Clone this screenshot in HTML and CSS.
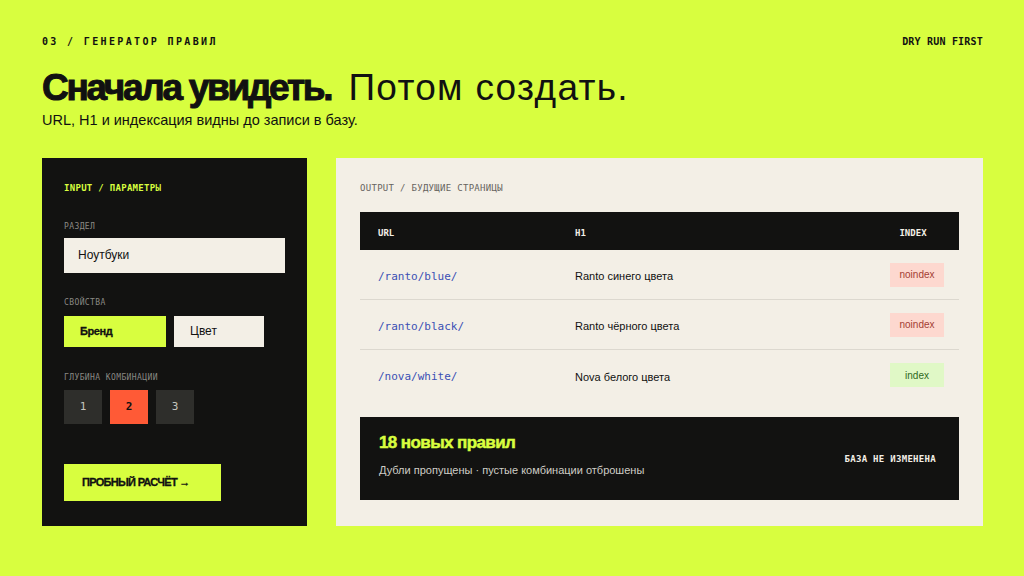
FILE: index.html
```html
<!DOCTYPE html>
<html lang="ru">
<head>
<meta charset="utf-8">
<link rel="stylesheet" href="styles.css">
</head>
<body>
<div class="page">
  <header class="topbar">
    <div class="eyebrow">03 / ГЕНЕРАТОР ПРАВИЛ</div>
    <div class="tag">DRY RUN FIRST</div>
  </header>
  <h1 class="title"><span class="strong">Сначала увидеть.</span> <span class="light">Потом создать.</span></h1>
  <p class="lead">URL, H1 и индексация видны до записи в базу.</p>

  <main class="panels">
    <section class="input-panel">
      <div class="panel-label lime">INPUT / ПАРАМЕТРЫ</div>
      <div class="field-label first">РАЗДЕЛ</div>
      <div class="input-box">Ноутбуки</div>
      <div class="field-label props">СВОЙСТВА</div>
      <div class="chips">
        <div class="chip active">Бренд</div>
        <div class="chip">Цвет</div>
      </div>
      <div class="field-label deep">ГЛУБИНА КОМБИНАЦИИ</div>
      <div class="depth">
        <div class="num">1</div>
        <div class="num on">2</div>
        <div class="num">3</div>
      </div>
      <div class="run-btn">ПРОБНЫЙ РАСЧЁТ →</div>
    </section>

    <section class="output-panel">
      <div class="panel-label gray">OUTPUT / БУДУЩИЕ СТРАНИЦЫ</div>
      <div class="table">
        <div class="row head">
          <div>URL</div>
          <div>H1</div>
          <div class="c">INDEX</div>
        </div>
        <div class="row">
          <div class="url">/ranto/blue/</div>
          <div class="h1">Ranto синего цвета</div>
          <div class="badge no">noindex</div>
        </div>
        <div class="row">
          <div class="url">/ranto/black/</div>
          <div class="h1">Ranto чёрного цвета</div>
          <div class="badge no">noindex</div>
        </div>
        <div class="row last">
          <div class="url">/nova/white/</div>
          <div class="h1">Nova белого цвета</div>
          <div class="badge yes">index</div>
        </div>
      </div>
      <div class="summary">
        <div class="sum-text">
          <div class="sum-title">18 новых правил</div>
          <div class="sum-sub">Дубли пропущены · пустые комбинации отброшены</div>
        </div>
        <div class="sum-status">БАЗА НЕ ИЗМЕНЕНА</div>
      </div>
    </section>
  </main>
</div>
</body>
</html>
```

FILE: styles.css
```css
* { box-sizing: border-box; }
html, body { margin: 0; padding: 0; }
body {
  width: 1024px;
  height: 576px;
  background: #d8fe3f;
  font-family: "Liberation Sans", Arial, sans-serif;
  color: #111;
  overflow: hidden;
}
.page {
  padding: 36px 41px 0 42px;
}
.topbar {
  display: flex;
  justify-content: space-between;
  align-items: center;
  height: 12px;
}
.eyebrow {
  font-family: "DejaVu Sans Mono", monospace;
  font-weight: 700;
  font-size: 10px;
  letter-spacing: 2.35px;
  line-height: 12px;
}
.tag {
  font-family: "DejaVu Sans Mono", monospace;
  font-size: 10px;
  letter-spacing: 0.2px;
  line-height: 12px;
  font-weight: 700;
}
.title {
  margin: 19px 0 0;
  font-size: 37px;
  line-height: 41px;
  font-weight: 400;
  white-space: nowrap;
}
.title .strong {
  font-weight: 700;
  letter-spacing: -2.3px;
  -webkit-text-stroke: 1px #111;
}
.title .light {
  margin-left: 7px;
  letter-spacing: 1.3px;
}
.lead {
  margin: 3px 0 0;
  font-size: 14.5px;
  line-height: 18px;
}
.panels {
  margin-top: 29px;
  display: flex;
  gap: 29px;
  height: 368px;
}
.input-panel {
  width: 265px;
  background: #121211;
  padding: 25px 22px;
  display: flex;
  flex-direction: column;
  align-items: flex-start;
}
.panel-label {
  font-family: "DejaVu Sans Mono", monospace;
  font-size: 9px;
  line-height: 10px;
  letter-spacing: 0.3px;
}
.panel-label.lime { color: #d8fe3f; font-weight: 700; }
.panel-label.gray { color: #66645f; }
.field-label {
  font-family: "DejaVu Sans Mono", monospace;
  font-size: 8px;
  line-height: 10px;
  letter-spacing: 0.4px;
  color: #8a8984;
  margin-top: 23px;
}
.field-label.first { margin-top: 29px; }
.field-label.props { margin-top: 25px; }
.field-label.deep { margin-top: 26px; }
.input-box {
  margin-top: 6px;
  width: 221px;
  height: 37px;
  background: #f3efe6;
  color: #111;
  font-size: 12px;
  display: flex;
  align-items: center;
  padding-left: 14px;
}
.chips {
  margin-top: 8px;
  display: flex;
  gap: 8px;
}
.chip {
  height: 31px;
  width: 90px;
  background: #f3efe6;
  font-size: 12px;
  display: flex;
  align-items: center;
  padding-left: 16px;
}
.chip.active {
  width: 102px;
  background: #d8fe3f;
  font-weight: 700;
  font-size: 11px;
  letter-spacing: -0.4px;
  -webkit-text-stroke: 0.3px #111;
}
.depth {
  margin-top: 7px;
  display: flex;
  gap: 8px;
}
.num {
  width: 38px;
  height: 34px;
  background: #2e2e2b;
  color: #c4c3bd;
  font-family: "DejaVu Sans Mono", monospace;
  font-size: 11px;
  display: flex;
  align-items: center;
  justify-content: center;
}
.num.on { background: #ff5a36; color: #111; font-weight: 700; }
.run-btn {
  margin-top: 40px;
  width: 157px;
  height: 40px;
  background: #d8fe3f;
  display: flex;
  align-items: center;
  padding-left: 18px;
  font-weight: 700;
  font-size: 11px;
  letter-spacing: -0.7px;
  -webkit-text-stroke: 0.3px #111;
  white-space: nowrap;
}
.output-panel {
  width: 647px;
  background: #f3efe6;
  padding: 25px 24px;
}
.table { margin-top: 19px; }
.row {
  display: grid;
  grid-template-columns: 197px 1fr 54px;
  align-items: center;
  height: 50px;
  padding: 3px 15px 0 18px;
  border-bottom: 1px solid #dcd8cf;
}
.row.last { border-bottom: none; }
.row.head {
  height: 38px;
  background: #121211;
  color: #f3efe6;
  border-bottom: none;
  font-family: "DejaVu Sans Mono", monospace;
  font-size: 9px;
  font-weight: 700;
  padding-top: 3px;
}
.row.head .c { text-align: center; margin-left: -8px; }
.url {
  font-family: "DejaVu Sans Mono", monospace;
  font-size: 11px;
  color: #3b50b4;
}
.h1 { font-size: 11px; color: #111; }
.badge {
  height: 24px;
  display: flex;
  align-items: center;
  justify-content: center;
  font-size: 10px;
  margin-top: -3px;
}
.badge.no { background: #fdd8cf; color: #a33d33; }
.badge.yes { background: #e0f8c6; color: #2f6a1d; }
.summary {
  margin-top: 17px;
  height: 83px;
  background: #121211;
  display: flex;
  justify-content: space-between;
  align-items: flex-start;
  padding: 16px 23px 0 19px;
}
.sum-title {
  color: #d8fe3f;
  font-weight: 700;
  font-size: 17px;
  line-height: 20px;
  letter-spacing: -0.6px;
  -webkit-text-stroke: 0.5px #d8fe3f;
}
.sum-sub {
  margin-top: 11px;
  font-size: 11px;
  color: #cfcdc6;
}
.sum-status {
  align-self: center;
  margin-top: -16px;
  font-family: "DejaVu Sans Mono", monospace;
  font-size: 9px;
  font-weight: 700;
  letter-spacing: 0.3px;
  color: #f3efe6;
}
```
